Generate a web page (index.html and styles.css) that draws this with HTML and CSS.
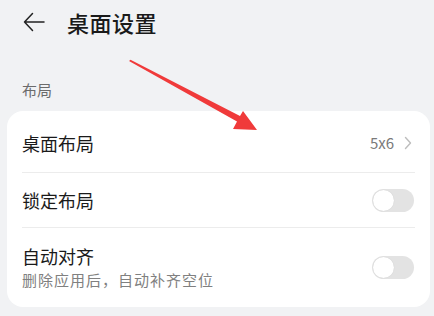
FILE: index.html
```html
<!DOCTYPE html>
<html lang="zh">
<head>
<meta charset="utf-8">
<link rel="stylesheet" href="styles.css">
</head>
<body>
<div class="page">
  <header class="topbar">
    <svg class="back" width="24" height="24" viewBox="0 0 24 24"><path d="M22 12H2.5M10.5 3.5L2.5 12L10.5 20.5" fill="none" stroke="#222" stroke-width="1.5" stroke-linecap="round" stroke-linejoin="round"/></svg>
    <h1 class="title">桌面设置</h1>
  </header>
  <div class="section-label">布局</div>
  <div class="card">
    <div class="row row-first">
      <div class="row-main"><div class="row-title">桌面布局</div></div>
      <div class="row-value">5x6</div>
      <svg class="chev" width="8" height="14" viewBox="0 0 8 14"><path d="M1.5 1.5L6.5 7L1.5 12.5" fill="none" stroke="#bdbdbd" stroke-width="1.4" stroke-linecap="round" stroke-linejoin="round"/></svg>
    </div>
    <div class="divider"></div>
    <div class="row">
      <div class="row-main"><div class="row-title">锁定布局</div></div>
      <div class="toggle"><div class="knob"></div></div>
    </div>
    <div class="divider"></div>
    <div class="row row-tall">
      <div class="row-main">
        <div class="row-title">自动对齐</div>
        <div class="row-sub">删除应用后，自动补齐空位</div>
      </div>
      <div class="toggle"><div class="knob"></div></div>
    </div>
  </div>
  <svg class="annot" width="434" height="316" viewBox="0 0 434 316">
    <polygon points="129,61 130.5,59.8 240,116 243,111 257,130 233,129 237,121.5" fill="#f03a3a"/>
  </svg>
</div>
</body>
</html>
```
FILE: styles.css
```css
* { box-sizing: border-box; }
html, body { margin: 0; padding: 0; }
body {
  width: 434px;
  height: 316px;
  overflow: hidden;
  background: #f1f2f4;
  font-family: "Noto Sans CJK SC", "Noto Sans", sans-serif;
  color: #1a1a1a;
}
.page { position: relative; width: 434px; height: 316px; padding: 0 4px 0 7px; }
.topbar {
  display: flex;
  align-items: center;
  height: 44px;
  padding-left: 15px;
}
.back { flex: none; }
.title {
  margin: 0 0 0 21px;
  font-size: 22px;
  font-weight: 500;
  color: #1a1a1a;
  letter-spacing: 0.5px;
}
.section-label {
  margin-top: 35px;
  padding-left: 15px;
  font-size: 15px;
  line-height: 22px;
  color: #6b6b6b;
}
.card {
  margin-top: 10px;
  background: #ffffff;
  border-radius: 16px;
  padding: 0 15px;
}
.row {
  display: flex;
  align-items: center;
  height: 54px;
}
.row-first { height: 61px; padding-top: 2px; }
.row-tall { height: 79px; }
.row-main { flex: 1; }
.row-title { font-size: 18px; line-height: 24px; color: #1a1a1a; }
.row-sub { font-size: 15px; line-height: 22px; color: #808080; margin-top: 1px; letter-spacing: 1px; }
.row-value { font-size: 15px; color: #7a7a7a; margin-right: 10px; }
.chev { flex: none; margin-right: 3px; }
.divider { height: 1px; background: #ececec; }
.toggle {
  flex: none;
  width: 42px;
  height: 23px;
  border-radius: 12px;
  background: #e3e3e3;
  padding: 1px;
  margin-right: 1px;
}
.knob {
  width: 21px;
  height: 21px;
  border-radius: 50%;
  background: #fff;
  box-shadow: 0 0 1px rgba(0,0,0,0.15);
}
.annot { position: absolute; left: 0; top: 0; pointer-events: none; }
```
